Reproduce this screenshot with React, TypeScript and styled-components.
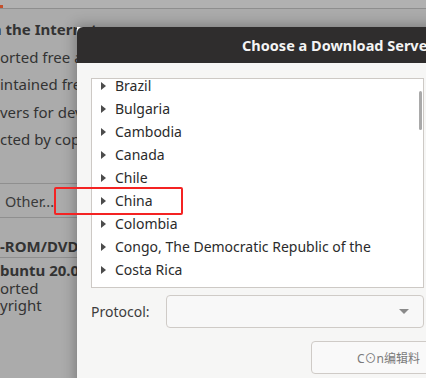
import styled, { createGlobalStyle } from "styled-components";
import { useEffect, useRef } from "react";

const countries = [
  "Brazil",
  "Bulgaria",
  "Cambodia",
  "Canada",
  "Chile",
  "China",
  "Colombia",
  "Congo, The Democratic Republic of the",
  "Costa Rica",
  "Croatia",
];

const GlobalStyle = createGlobalStyle`
  html, body {
    margin: 0;
    padding: 0;
    width: 426px;
    height: 378px;
    overflow: hidden;
  }
  body {
    font-family: "Noto Sans", "Open Sans", sans-serif;
    background: #ababab;
  }
`;

export default function App() {
  const listRef = useRef<HTMLDivElement>(null);

  // 목록이 살짝 스크롤된 상태
  useEffect(() => {
    if (listRef.current) listRef.current.scrollTop = 5;
  }, []);

  return (
    <Screen>
      <GlobalStyle />

      {/* 뒤쪽 Software & Updates 창 (흐리게) */}
      <BackWindow>
        <TabStrip>
          <TabMark />
        </TabStrip>
        <Section>
          <BackLine $bold $shift={-13}>m the Internet</BackLine>
          <BackLine>orted free and open-source software (main)</BackLine>
          <BackLine>intained free and open-source software (universe)</BackLine>
          <BackLine>vers for devices (restricted)</BackLine>
          <BackLine>cted by copyright or legal issues (multiverse)</BackLine>
        </Section>
        <OtherRow>
          <OtherLabel>Other...</OtherLabel>
        </OtherRow>
        <CdHeader>-ROM/DVD</CdHeader>
        <CdBlock>
          <CdLine $bold>buntu 20.04 'Focal Fossa'</CdLine>
          <CdLine>orted</CdLine>
          <CdLine>yright</CdLine>
        </CdBlock>
      </BackWindow>

      {/* 서버 선택 대화상자 */}
      <Dialog>
        <DialogHeader>
          <DialogTitle>Choose a Download Server</DialogTitle>
        </DialogHeader>
        <DialogBody>
          <ListFrame>
            <ListScroll ref={listRef}>
              {countries.map((name) => (
                <CountryRow key={name}>
                  <Expander />
                  <CountryName>{name}</CountryName>
                </CountryRow>
              ))}
            </ListScroll>
            <ScrollThumb />
          </ListFrame>

          <ProtocolRow>
            <ProtocolLabel>Protocol:</ProtocolLabel>
            <Combo>
              <ComboArrow />
            </Combo>
          </ProtocolRow>

          <ButtonRow>
            <ChooseButton>
              <Watermark>C⊙n编辑料</Watermark>
            </ChooseButton>
          </ButtonRow>
        </DialogBody>
      </Dialog>

      <Highlight />
    </Screen>
  );
}

const Screen = styled.div`
  position: relative;
  width: 426px;
  height: 378px;
  overflow: hidden;
  background: #ababab;
`;

//뒤쪽 창
const BackWindow = styled.div`
  display: flex;
  flex-direction: column;
  width: 426px;
  color: #333;
  font-size: 15px;
`;

const TabStrip = styled.div`
  position: relative;
  height: 8px;
  background: #b1b1b1;
  border-bottom: 1px solid #8e8e8e;
`;

const TabMark = styled.div`
  position: absolute;
  left: 0;
  bottom: 0;
  width: 3px;
  height: 3px;
  background: #c4502c;
`;

const Section = styled.div`
  display: flex;
  flex-direction: column;
  padding-top: 7px;
  height: 175px;
  box-sizing: border-box;
  border-bottom: 1px solid #8f8f8f;
`;

const BackLine = styled.div<{ $bold?: boolean; $shift?: number }>`
  height: 27.5px;
  line-height: 27.5px;
  white-space: nowrap;
  font-weight: ${(p) => (p.$bold ? 700 : 400)};
  margin-left: ${(p) => p.$shift ?? 0}px;
  font-size: 15px;
`;

const OtherRow = styled.div`
  height: 33px;
  display: flex;
  align-items: center;
  padding-left: 5px;
  border-bottom: 1px solid #8f8f8f;
`;

const OtherLabel = styled.span`
  font-size: 14.5px;
  color: #3a3a3a;
`;

const CdHeader = styled.div`
  height: 40px;
  line-height: 56px;
  font-weight: 700;
  font-size: 15px;
  white-space: nowrap;
  box-sizing: border-box;
  border-bottom: 1px solid #8f8f8f;
`;

const CdBlock = styled.div`
  display: flex;
  flex-direction: column;
  padding-top: 4px;
`;

const CdLine = styled.div<{ $bold?: boolean }>`
  height: 17.5px;
  line-height: 17.5px;
  white-space: nowrap;
  font-weight: ${(p) => (p.$bold ? 700 : 400)};
  font-size: 15px;
`;

//대화상자
const Dialog = styled.div`
  position: absolute;
  left: 77px;
  top: 27px;
  width: 361px;
  height: 360px;
  background: #f6f6f5;
  box-shadow: 0 0 12px 2px rgba(0, 0, 0, 0.28);
  display: flex;
  flex-direction: column;
`;

const DialogHeader = styled.div`
  height: 36px;
  background: #2f2d2d;
  display: flex;
  align-items: center;
  padding-left: 165px;
  border-radius: 6px 6px 0 0;
`;

const DialogTitle = styled.div`
  color: #f4f4f4;
  font-weight: 700;
  font-size: 14.5px;
  white-space: nowrap;
`;

const DialogBody = styled.div`
  display: flex;
  flex-direction: column;
  padding: 15px 14px 0 14px;
`;

const ListFrame = styled.div`
  position: relative;
  height: 210px;
  background: #fff;
  border: 1px solid #cdc9c5;
  box-sizing: border-box;
`;

const ListScroll = styled.div`
  height: 100%;
  overflow: hidden;
`;

const CountryRow = styled.div`
  height: 23px;
  display: flex;
  align-items: center;
  padding-left: 9px;
  gap: 9px;
`;

const Expander = styled.span`
  width: 0;
  height: 0;
  border-top: 4px solid transparent;
  border-bottom: 4px solid transparent;
  border-left: 5px solid #4c4c4c;
`;

const CountryName = styled.span`
  font-size: 14px;
  color: #2b2b2b;
  white-space: nowrap;
`;

const ScrollThumb = styled.div`
  position: absolute;
  right: 1px;
  top: 12px;
  width: 3px;
  height: 39px;
  border-radius: 2px;
  background: #a9a9a9;
`;

const ProtocolRow = styled.div`
  display: flex;
  align-items: center;
  margin-top: 7px;
`;

const ProtocolLabel = styled.span`
  width: 75px;
  font-size: 14px;
  color: #3d3d3d;
`;

const Combo = styled.div`
  flex: 1;
  height: 33px;
  box-sizing: border-box;
  border: 1px solid #cfcbc7;
  border-radius: 4px;
  background: #f8f8f8;
  display: flex;
  align-items: center;
  justify-content: flex-end;
  padding-right: 14px;
`;

const ComboArrow = styled.span`
  width: 0;
  height: 0;
  border-left: 5px solid transparent;
  border-right: 5px solid transparent;
  border-top: 5px solid #8a8a8a;
`;

const ButtonRow = styled.div`
  display: flex;
  margin-top: 13px;
  padding-left: 220px;
`;

const ChooseButton = styled.div`
  flex: none;
  width: 140px;
  height: 33px;
  box-sizing: border-box;
  border: 1px solid #cfcbc7;
  border-radius: 4px;
  background: #f9f9f9;
  display: flex;
  align-items: center;
  padding-left: 45px;
`;

const Watermark = styled.span`
  font-family: "Noto Sans", "Noto Sans CJK SC", sans-serif;
  font-size: 12px;
  color: #7a7a7a;
  white-space: nowrap;
`;

//빨간 강조 표시
const Highlight = styled.div`
  position: absolute;
  left: 54px;
  top: 187px;
  width: 129px;
  height: 28px;
  box-sizing: border-box;
  border: 2.5px solid #f42323;
  border-radius: 2px;
`;
